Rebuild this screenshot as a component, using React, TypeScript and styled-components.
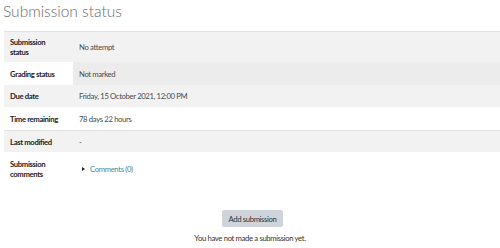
import React from 'react'
import styled, { createGlobalStyle } from 'styled-components'

const GlobalStyle = createGlobalStyle`
  html, body {
    margin: 0;
    padding: 0;
    background: #fff;
  }
  body {
    font-family: Lato, "Open Sans", sans-serif;
    color: #1d2125;
    width: 500px;
    height: 248px;
    overflow: hidden;
  }
`

const Page = styled.div`
  padding: 0 0 0 4px;
`

const Heading = styled.h3`
  margin: 0;
  padding: 0;
  height: 31px;
  box-sizing: border-box;
  margin-left: -1px;
  font-size: 15.5px;
  font-weight: 300;
  color: #6a6a6a;
  line-height: 22px;
`

const Table = styled.div`
  display: grid;
  grid-template-columns: 69px 1fr;
  font-size: 7.7px;
  letter-spacing: -0.35px;
  line-height: 10px;
`

const Cell = styled.div<{ bg: string, head?: boolean, rowHeight: number, topBorder?: boolean }>`
  background: ${props => props.bg};
  height: ${props => props.rowHeight}px;
  box-sizing: border-box;
  display: flex;
  align-items: center;
  padding: 0 6px;
  font-weight: ${props => props.head ? 700 : 400};
  color: ${props => props.head ? '#1d2125' : '#4a4a4a'};
  ${props => props.topBorder && `border-top: 1px solid #e2e2e2;`}
`

const CommentsToggle = styled.span`
  display: inline-flex;
  align-items: center;
  gap: 5px;
  margin-left: 3px;
  color: #4f8497;
`

const Caret = styled.span`
  width: 0;
  height: 0;
  border-top: 2.5px solid transparent;
  border-bottom: 2.5px solid transparent;
  border-left: 3px solid #1d2125;
`

const Actions = styled.div`
  display: flex;
  flex-direction: column;
  align-items: center;
  padding-top: 25px;
  margin-left: -4px;
  font-size: 7.7px;
  letter-spacing: -0.35px;
`

const Button = styled.button`
  font-family: inherit;
  font-size: inherit;
  letter-spacing: inherit;
  color: #333;
  background: #ced4da;
  border: none;
  border-radius: 2px;
  width: 61px;
  height: 17px;
  padding: 0;
  margin-left: 5px;
`

const Note = styled.div`
  margin-top: 6px;
  color: #333;
`

interface Row {
  label: React.ReactNode
  value: React.ReactNode
  height: number
  headBg: string
  valueBg: string
  border?: boolean
}

const rows: Row[] = [
  { label: <>Submission<br />status</>, value: 'No attempt', height: 31, headBg: '#f2f2f2', valueBg: '#f2f2f2', border: true },
  { label: 'Grading status', value: 'Not marked', height: 23, headBg: '#fff', valueBg: '#ececec' },
  { label: 'Due date', value: 'Friday, 15 October 2021, 12:00 PM', height: 22, headBg: '#f2f2f2', valueBg: '#f2f2f2' },
  { label: 'Time remaining', value: '78 days 22 hours', height: 23, headBg: '#fff', valueBg: '#fff' },
  { label: 'Last modified', value: '-', height: 22, headBg: '#f2f2f2', valueBg: '#f2f2f2', border: true },
  {
    label: <>Submission<br />comments</>,
    value: <CommentsToggle><Caret />Comments (0)</CommentsToggle>,
    height: 33,
    headBg: '#fff',
    valueBg: '#fff',
  },
]

export default function App() {
  return (
    <Page>
      <GlobalStyle />
      <Heading>Submission status</Heading>
      <Table>
        {rows.map((row, i) => (
          <React.Fragment key={i}>
            <Cell head bg={row.headBg} rowHeight={row.height} topBorder={row.border}>{row.label}</Cell>
            <Cell bg={row.valueBg} rowHeight={row.height} topBorder={row.border}>{row.value}</Cell>
          </React.Fragment>
        ))}
      </Table>
      <Actions>
        <Button>Add submission</Button>
        <Note>You have not made a submission yet.</Note>
      </Actions>
    </Page>
  )
}
